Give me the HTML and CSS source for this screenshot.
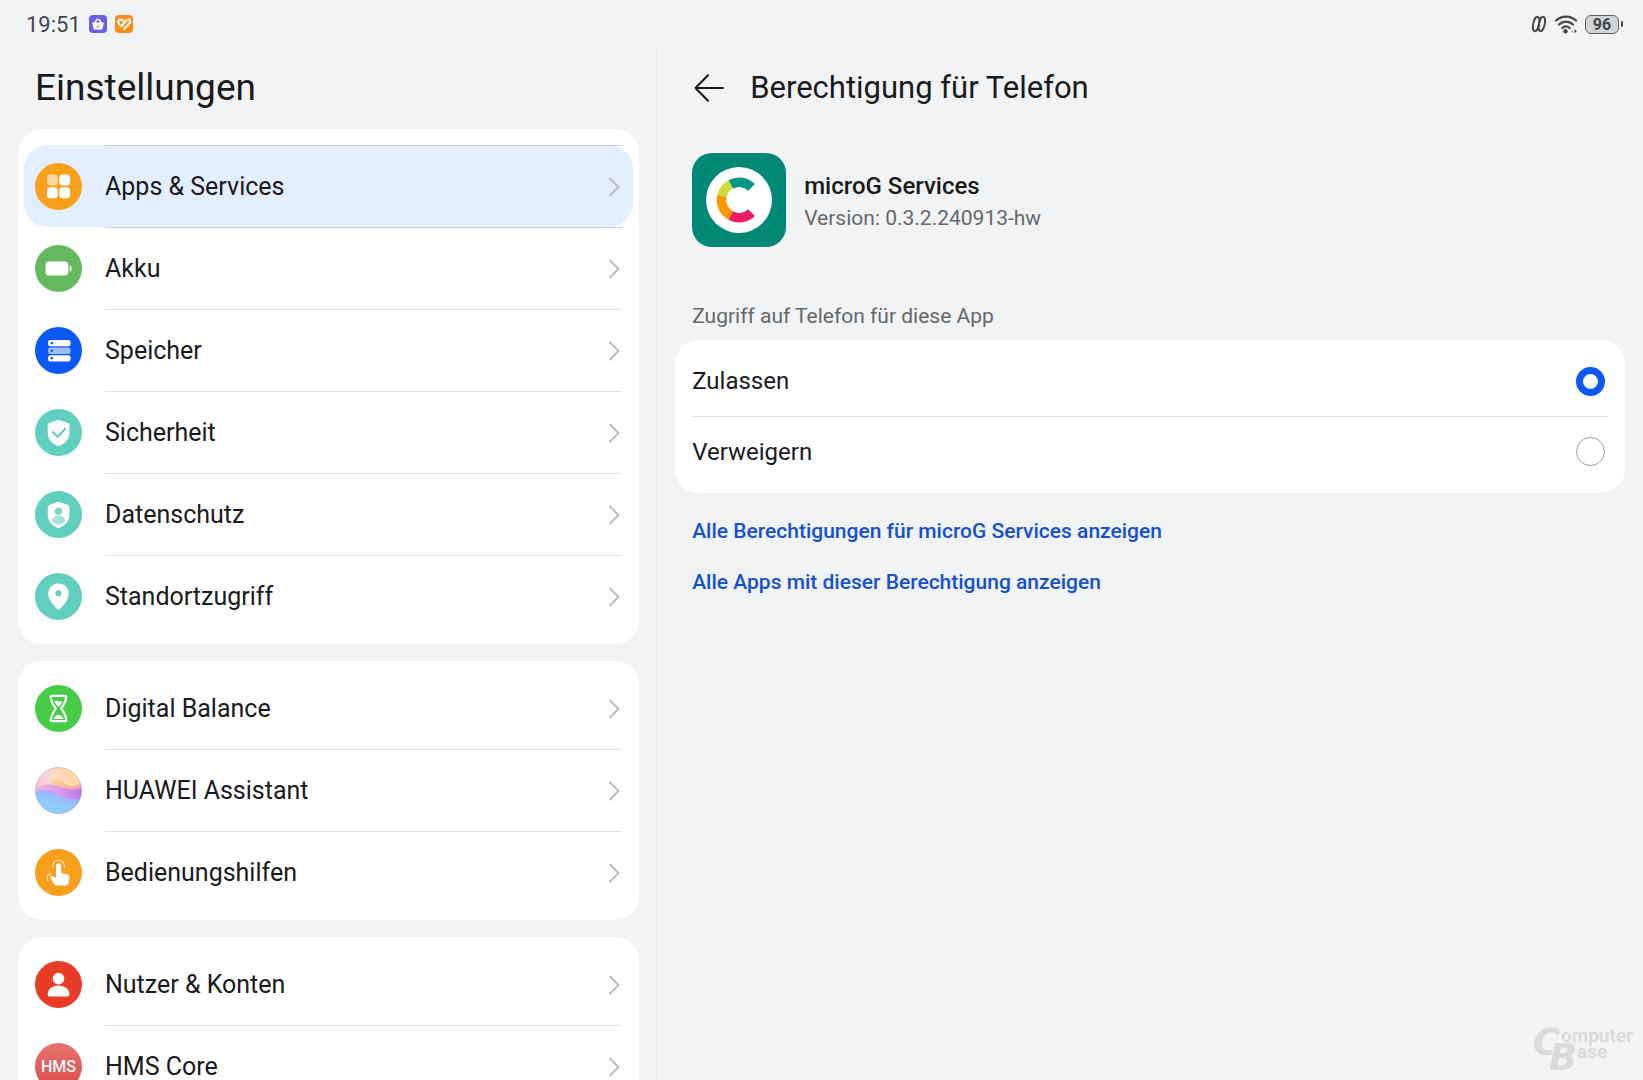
FILE: index.html
```html
<!DOCTYPE html>
<html lang="de">
  <head>
    <meta charset="UTF-8" />
    <meta name="viewport" content="width=device-width, initial-scale=1.0" />
    <title>Einstellungen</title>
    <link rel="stylesheet" href="styles.css">
  </head>
  <body>
    <header class="status-bar">
      <span class="time">19:51</span>
      <svg class="status-app" viewBox="0 0 18 18">
        <rect width="18" height="18" rx="4" fill="#6a5fe8" />
        <path d="M3 7.500h12l-1.600 6.200a1 1 0 0 1-1 .8H5.600a1 1 0 0 1-1-.8z" fill="#fff" />
        <path d="M5.500 8 8 4.500h2L12.500 8" fill="none" stroke="#fff" stroke-width="1.300" />
        <path d="m9 9.500 2 3H7z" fill="#f3a45c" />
      </svg>
      <svg class="status-app" viewBox="0 0 18 18">
        <rect width="18" height="18" rx="4" fill="#fa8c16" />
        <g fill="none" stroke="#fff" stroke-width="2.200" stroke-linecap="round" stroke-linejoin="round">
          <path d="M4.500 9.500C2.500 7.500 3 4.500 5.500 4.300c1.300 0 2 .7 2.500 1.200" />
          <path d="M6.200 11.300 11.500 5.500" />
          <path d="m9 13.900 5.500-5.700c1.500-1.700.7-3.700-1-3.900" />
        </g>
      </svg>
      <div class="status-right">
        <svg class="nfc" viewBox="0 0 16 18" fill="none" stroke="#444648" stroke-width="1.900">
          <ellipse cx="5.200" cy="9" rx="2.900" ry="7.300" transform="rotate(12 5.200 9)" />
          <ellipse cx="10.800" cy="9" rx="2.900" ry="7.300" transform="rotate(12 10.800 9)" />
        </svg>
        <svg class="wifi" viewBox="0 0 24 20" fill="none" stroke="#444648" stroke-width="2.200" stroke-linecap="round">
          <path d="M2 6.500c5.700-5.300 14.300-5.300 20 0" />
          <path d="M5 10.500c4-3.800 10-3.800 14 0" />
          <path d="M8.300 14c2.200-1.900 5.200-1.900 7.400 0" />
          <circle cx="11.500" cy="17.200" r="2.200" fill="#444648" stroke="none" />
          <path d="m19 15.200-2.200 2 2.200 2z" fill="#b5b7b9" stroke="none" />
          <path d="m20.500 15.200 2.300 2-2.300 2z" fill="#444648" stroke="none" />
        </svg>
        <div class="battery"><span class="battery-level">96</span></div>
      </div>
    </header>

    <div class="panes">
      <aside class="sidebar">
        <h1 class="sidebar-title">Einstellungen</h1>

        <nav class="menu">
          <div class="card card-scrolled">
            <a class="row active" href="#apps">
              <svg class="row-icon" viewBox="0 0 47 47">
                <circle cx="23.500" cy="23.500" r="23.500" fill="#f8a01c" />
                <g fill="#fff">
                  <rect x="12" y="11.500" width="10.800" height="11" rx="3.500" opacity=".6" />
                  <rect x="24.300" y="11.500" width="10.800" height="11" rx="3.500" />
                  <rect x="12" y="24.200" width="10.800" height="11" rx="3.500" />
                  <rect x="24.300" y="24.200" width="10.800" height="11" rx="3.500" />
                </g>
              </svg>
              <span class="row-body">Apps &amp; Services
                <svg class="chevron" viewBox="0 0 12 20"><path d="m2 1.500 8.500 8.500L2 18.500" /></svg>
              </span>
            </a>
            <a class="row" href="#akku">
              <svg class="row-icon" viewBox="0 0 47 47">
                <circle cx="23.500" cy="23.500" r="23.500" fill="#65ba60" />
                <rect x="10.500" y="16.500" width="22.800" height="14" rx="3.500" fill="#fff" />
                <path d="M34.500 20.200c2.300 0 2.300 1.300 2.300 3.300s0 3.300-2.300 3.300z" fill="#fff" opacity=".7" />
              </svg>
              <span class="row-body">Akku
                <svg class="chevron" viewBox="0 0 12 20"><path d="m2 1.500 8.500 8.500L2 18.500" /></svg>
              </span>
            </a>
            <a class="row" href="#speicher">
              <svg class="row-icon" viewBox="0 0 47 47">
                <circle cx="23.500" cy="23.500" r="23.500" fill="#0a59f7" />
                <g fill="#fff">
                  <rect x="13" y="13" width="22.600" height="6.300" rx="2.500" />
                  <rect x="13" y="20.600" width="22.600" height="6.300" rx="2.500" opacity=".6" />
                  <rect x="13" y="28.200" width="22.600" height="6.300" rx="2.500" />
                </g>
                <g fill="#0a59f7">
                  <circle cx="16.800" cy="16.100" r="1.300" />
                  <circle cx="16.800" cy="23.700" r="1.300" />
                  <circle cx="16.800" cy="31.300" r="1.300" />
                </g>
              </svg>
              <span class="row-body">Speicher
                <svg class="chevron" viewBox="0 0 12 20"><path d="m2 1.500 8.500 8.500L2 18.500" /></svg>
              </span>
            </a>
            <a class="row" href="#sicherheit">
              <svg class="row-icon" viewBox="0 0 47 47">
                <circle cx="23.500" cy="23.500" r="23.500" fill="#61cfbe" />
                <path d="M22.500 11q1-.5 2 0l8.500 3q1.500.5 1.500 2v8c0 6-4 10-9.500 12.700q-1.500.7-3 0C16.500 34 12.800 30 12.800 24v-8q0-1.500 1.500-2z" fill="#fff" />
                <path d="m17.700 23 5 4.800 7.600-8" fill="none" stroke="#61cfbe" stroke-width="2" stroke-linecap="round" />
              </svg>
              <span class="row-body">Sicherheit
                <svg class="chevron" viewBox="0 0 12 20"><path d="m2 1.500 8.500 8.500L2 18.500" /></svg>
              </span>
            </a>
            <a class="row" href="#datenschutz">
              <svg class="row-icon" viewBox="0 0 47 47">
                <circle cx="23.500" cy="23.500" r="23.500" fill="#61cfbe" />
                <path d="M22.500 11q1-.5 2 0l8.500 3q1.500.5 1.500 2v8c0 6-4 10-9.500 12.700q-1.500.7-3 0C16.500 34 12.800 30 12.800 24v-8q0-1.500 1.500-2z" fill="#fff" />
                <circle cx="23.500" cy="20.300" r="3.700" fill="#7fd8ca" />
                <path d="M17 30c0-3.500 2.800-5.200 6.500-5.200S30 26.500 30 30c-1.500 2.200-4 3.400-6.500 3.400S18.500 32.200 17 30" fill="#a5e4da" />
              </svg>
              <span class="row-body">Datenschutz
                <svg class="chevron" viewBox="0 0 12 20"><path d="m2 1.500 8.500 8.500L2 18.500" /></svg>
              </span>
            </a>
            <a class="row" href="#standort">
              <svg class="row-icon" viewBox="0 0 47 47">
                <circle cx="23.500" cy="23.500" r="23.500" fill="#61cfbe" />
                <path d="M23.500 10.500c6 0 10.300 4.500 10.300 10.300 0 5.700-4.800 11-8.800 15.200q-1.500 1.500-3 0c-4-4.200-8.800-9.500-8.800-15.200 0-5.800 4.300-10.300 10.300-10.300" fill="#fff" />
                <circle cx="23.500" cy="20.300" r="3" fill="#61cfbe" />
              </svg>
              <span class="row-body">Standortzugriff
                <svg class="chevron" viewBox="0 0 12 20"><path d="m2 1.500 8.500 8.500L2 18.500" /></svg>
              </span>
            </a>
          </div>

          <div class="card">
            <a class="row" href="#balance">
              <svg class="row-icon" viewBox="0 0 47 47">
                <circle cx="23.500" cy="23.500" r="23.500" fill="#47cc47" />
                <path d="M17 10.800h13q1.500 0 1.200 1.500c-.7 5-2.200 7.700-5.200 11.200 3 3.500 4.500 6.200 5.200 11.200q.3 1.500-1.200 1.500H17q-1.500 0-1.200-1.500c.7-5 2.200-7.700 5.200-11.200-3-3.500-4.500-6.200-5.200-11.200q-.3-1.500 1.200-1.500z" fill="none" stroke="#fff" stroke-width="2.200" stroke-linejoin="round" />
                <path d="M19.500 16.300q2-.9 4 0t4 0c-.8 2.200-2.200 4.200-4 5.800-1.800-1.600-3.200-3.600-4-5.800M18.500 34c.8-2.500 2.500-3.700 5-4.200 2.500.5 4.200 1.700 5 4.200z" fill="#fff" />
              </svg>
              <span class="row-body">Digital Balance
                <svg class="chevron" viewBox="0 0 12 20"><path d="m2 1.500 8.500 8.500L2 18.500" /></svg>
              </span>
            </a>
            <a class="row" href="#assistant">
              <svg class="row-icon" viewBox="0 0 47 47">
                <defs>
                  <linearGradient id="skyTop" x1="0" y1="0.600" x2="1" y2="0.200">
                    <stop offset="0" stop-color="#f5bfe0" />
                    <stop offset=".45" stop-color="#fbd9cf" />
                    <stop offset="1" stop-color="#fdd98c" />
                  </linearGradient>
                  <linearGradient id="skyRight" x1="0" y1="0" x2="0.300" y2="1">
                    <stop offset="0" stop-color="#fdeab8" />
                    <stop offset=".5" stop-color="#fcc08f" />
                    <stop offset="1" stop-color="#f08bc0" />
                  </linearGradient>
                  <linearGradient id="waveMid" x1="0" y1="0" x2="1" y2="0">
                    <stop offset="0" stop-color="#f7b4d4" />
                    <stop offset=".5" stop-color="#dc9bea" />
                    <stop offset="1" stop-color="#bd74ee" />
                  </linearGradient>
                  <linearGradient id="waveLow" x1="0.200" y1="1" x2="0.700" y2="0">
                    <stop offset="0" stop-color="#7fdcfb" />
                    <stop offset=".6" stop-color="#95c0fb" />
                    <stop offset="1" stop-color="#b29cfa" />
                  </linearGradient>
                  <clipPath id="orb"><circle cx="23.500" cy="23.500" r="23" /></clipPath>
                </defs>
                <g clip-path="url(#orb)">
                  <path d="M0 0h47v47H0z" fill="url(#skyTop)" />
                  <path d="M17 8c7 1 10 9 18 11 5 1 9-2 12-5v16H17z" fill="url(#skyRight)" />
                  <path d="M0 22c7-6 15-5 22-3 9 3 18 6 25 1v16H0z" fill="url(#waveMid)" />
                  <path d="M0 25c8-4 15-2 22 2s16 7 25 4v16H0z" fill="url(#waveLow)" />
                </g>
                <circle cx="23.500" cy="23.500" r="23" fill="none" stroke="#a890b8" stroke-opacity=".55" />
              </svg>
              <span class="row-body">HUAWEI Assistant
                <svg class="chevron" viewBox="0 0 12 20"><path d="m2 1.500 8.500 8.500L2 18.500" /></svg>
              </span>
            </a>
            <a class="row" href="#bedienungshilfen">
              <svg class="row-icon" viewBox="0 0 47 47">
                <circle cx="23.500" cy="23.500" r="23.500" fill="#f8a01c" />
                <path d="M21 17a2.600 2.600 0 0 1 5.200 0v7l5.800 1.200q2.700.6 2.400 3.300l-.9 6q-.4 2-2.400 2H21.500q-1.200 0-2-1l-3.700-5.700c-1.300-2.300.7-3.600 2.500-2.600L21 29z" fill="#fff" />
                <g fill="none" stroke="#fff" stroke-width="1.200" stroke-linecap="round" opacity=".7">
                  <path d="M18 18.500a5.800 5.800 0 1 1 11.200 0" />
                  <path d="M15.800 24.800a4 4 0 0 0-3 6.500" />
                </g>
              </svg>
              <span class="row-body">Bedienungshilfen
                <svg class="chevron" viewBox="0 0 12 20"><path d="m2 1.500 8.500 8.500L2 18.500" /></svg>
              </span>
            </a>
          </div>

          <div class="card">
            <a class="row" href="#konten">
              <svg class="row-icon" viewBox="0 0 47 47">
                <circle cx="23.500" cy="23.500" r="23.500" fill="#e83c26" />
                <circle cx="23.500" cy="17.600" r="5.800" fill="#fff" />
                <path d="M12.700 33.500c0-5.500 4.500-9 10.800-9s10.900 3.500 10.900 9q0 2-2 2H14.700q-2 0-2-2" fill="#fff" />
              </svg>
              <span class="row-body">Nutzer &amp; Konten
                <svg class="chevron" viewBox="0 0 12 20"><path d="m2 1.500 8.500 8.500L2 18.500" /></svg>
              </span>
            </a>
            <a class="row" href="#hms">
              <span class="row-icon hms-icon">HMS</span>
              <span class="row-body">HMS Core
                <svg class="chevron" viewBox="0 0 12 20"><path d="m2 1.500 8.500 8.500L2 18.500" /></svg>
              </span>
            </a>
          </div>
        </nav>
      </aside>

      <main class="detail">
        <div class="detail-header">
          <button class="back-btn" type="button" aria-label="Zurück">
            <svg viewBox="0 0 30 28"><path d="M29 14H1.500M14 1.200 1.500 14 14 26.800" /></svg>
          </button>
          <h2 class="detail-title">Berechtigung für Telefon</h2>
        </div>

        <section class="app-info">
          <svg class="app-logo" viewBox="0 0 94 94">
            <rect width="94" height="94" rx="20" fill="#008877" />
            <circle cx="47" cy="47" r="33" fill="#fff" />
            <g fill="none" stroke-width="9.500">
              <path d="M59.600 34.400A17.500 17.500 0 0 0 38.800 31.500" stroke="#009688" />
              <path d="M38.800 31.500A17.500 17.500 0 0 0 29.900 43" stroke="#cddc39" />
              <path d="M29.900 43A17.500 17.500 0 0 0 38.800 62.500" stroke="#ff9800" />
              <path d="M38.800 62.500A17.500 17.500 0 0 0 59.600 59.600" stroke="#e91e63" />
            </g>
          </svg>
          <div class="app-text">
            <h3 class="app-name">microG Services</h3>
            <p class="app-version">Version: 0.3.2.240913-hw</p>
          </div>
        </section>

        <form class="permission">
          <p class="permission-label" id="permissionLabel">Zugriff auf Telefon für diese App</p>
          <div class="card" role="radiogroup" aria-labelledby="permissionLabel">
            <div class="option">
              <label for="allow">Zulassen</label>
              <input type="radio" name="phone" id="allow" checked />
            </div>
            <div class="option">
              <label for="deny">Verweigern</label>
              <input type="radio" name="phone" id="deny" />
            </div>
          </div>
        </form>

        <div class="links">
          <a href="#permissions">Alle Berechtigungen für microG Services anzeigen</a>
          <a href="#all-apps">Alle Apps mit dieser Berechtigung anzeigen</a>
        </div>
      </main>
    </div>

    <svg class="watermark" viewBox="0 0 104 48">
      <text class="wm-big" x="0" y="31">C</text>
      <text class="wm-small" x="28" y="18">omputer</text>
      <text class="wm-small" x="44" y="34">ase</text>
      <text class="wm-big wm-front" x="16" y="46">B</text>
    </svg>
  </body>
</html>
```
FILE: styles.css
```css
* {
  box-sizing: border-box;
}
body {
  margin: 0;
  height: 100vh;
  display: flex;
  flex-direction: column;
  overflow: hidden;
  background: #f1f3f5;
  color: #191a1c;
  font-family: Roboto, "Noto Sans", sans-serif;
}
h1,
h2,
h3,
p {
  margin: 0;
}
a {
  color: inherit;
  text-decoration: none;
}
svg {
  display: block;
}

/* Status bar */
.status-bar {
  flex: none;
  display: flex;
  align-items: center;
  gap: 8px;
  height: 46px;
  padding: 2px 20px 0 26px;
  color: #444648;
}
.time {
  font-size: 22px;
}
.status-app {
  width: 18px;
  height: 18px;
}
.status-right {
  display: flex;
  align-items: center;
  gap: 7px;
  margin-left: auto;
}
.nfc {
  width: 16px;
  height: 18px;
}
.wifi {
  width: 24px;
  height: 20px;
}
.battery {
  display: flex;
  align-items: center;
  gap: 2px;
}
.battery::after {
  content: "";
  width: 2px;
  height: 6px;
  border-radius: 1px;
  background: #444648;
}
.battery-level {
  width: 34px;
  height: 19px;
  border: 1px solid #5c5e60;
  border-radius: 6px;
  background: #d3d4d6;
  font-size: 16px;
  font-weight: 700;
  line-height: 17px;
  text-align: center;
}

/* Two panes */
.panes {
  flex: 1;
  min-height: 0;
  display: grid;
  grid-template-columns: 2fr 3fr;
}
.sidebar {
  min-height: 0;
  display: flex;
  flex-direction: column;
  padding: 0 17px 0 18px;
  border-right: 1px solid #e3e5e7;
}
.sidebar-title {
  flex: none;
  padding-left: 17px;
  font-size: 37px;
  font-weight: 400;
  line-height: 83px;
}
.menu {
  flex: 1;
  min-height: 0;
  display: flex;
  flex-direction: column;
  gap: 17px;
  overflow: hidden;
}
.card {
  flex: none;
  padding: 6px 6px 7px;
  border-radius: 24px;
  background: #fff;
}
.card-scrolled {
  padding-top: 16px;
}
.row {
  display: flex;
  align-items: center;
  gap: 23px;
  height: 82px;
  padding: 0 11px;
  border-radius: 24px;
  font-size: 25px;
}
.active {
  background: #e3effe;
}
.row-icon {
  flex: none;
  width: 47px;
  height: 47px;
}
.row-body {
  flex: 1;
  align-self: stretch;
  display: flex;
  align-items: center;
  justify-content: space-between;
  padding-right: 2px;
  border-top: 1px solid transparent;
}
.active .row-body,
.row + .row .row-body {
  border-color: #e0e1e3;
}
.active .row-body,
.active + .row .row-body {
  border-color: #c9d3e0;
}
.chevron {
  width: 12px;
  height: 20px;
  fill: none;
  stroke: #b9bdc2;
  stroke-width: 2;
  stroke-linecap: round;
  stroke-linejoin: round;
}
.hms-icon {
  border-radius: 50%;
  background: linear-gradient(#e8736f, #dc4a48);
  color: #fff;
  font-size: 16px;
  font-weight: 500;
  line-height: 47px;
  text-align: center;
}

/* Permission pane */
.detail {
  padding: 0 18px;
}
.detail-header {
  display: flex;
  align-items: center;
  gap: 26px;
  height: 83px;
  padding-left: 19px;
}
.back-btn {
  padding: 0;
  border: none;
  background: none;
  cursor: pointer;
}
.back-btn svg {
  width: 30px;
  height: 28px;
  fill: none;
  stroke: #191a1c;
  stroke-width: 2;
  stroke-linecap: round;
  stroke-linejoin: round;
}
.detail-title {
  font-size: 31px;
  font-weight: 400;
}
.app-info {
  display: flex;
  align-items: center;
  gap: 18px;
  padding: 24px 17px 53px;
}
.app-logo {
  width: 94px;
  height: 94px;
}
.app-text {
  padding-top: 4px;
}
.app-name {
  font-size: 24px;
  font-weight: 500;
  line-height: 32px;
}
.app-version,
.permission-label {
  color: #66686a;
  font-size: 21px;
  line-height: 32px;
}
.permission-label {
  padding: 0 17px 8px;
}
.option {
  display: flex;
  align-items: center;
  justify-content: space-between;
  height: 70px;
  margin: 0 11px;
  padding-right: 3px;
  font-size: 24px;
}
.option + .option {
  border-top: 1px solid #dcdddf;
}
.option input {
  appearance: none;
  width: 29px;
  height: 29px;
  margin: 0;
  border: 1px solid #9c9ea0;
  border-radius: 50%;
  background: #fff;
}
.option input:checked {
  border: 7px solid #0a59f7;
}
.links {
  display: flex;
  flex-direction: column;
  align-items: flex-start;
  gap: 19px;
  padding: 22px 17px;
  color: #1450d0;
  font-size: 21px;
  font-weight: 500;
  line-height: 32px;
}

/* Corner mark over the page */
.watermark {
  position: fixed;
  right: 6px;
  bottom: 8px;
  width: 104px;
  height: 48px;
  overflow: visible;
  fill: #d9dadc;
  font-weight: 700;
}
.wm-big {
  font-family: "DejaVu Sans", sans-serif;
  font-size: 37px;
  font-style: italic;
}
.wm-small {
  font-size: 19px;
}
.wm-front {
  stroke: #f1f3f5;
  stroke-width: 2;
  paint-order: stroke;
}
```
